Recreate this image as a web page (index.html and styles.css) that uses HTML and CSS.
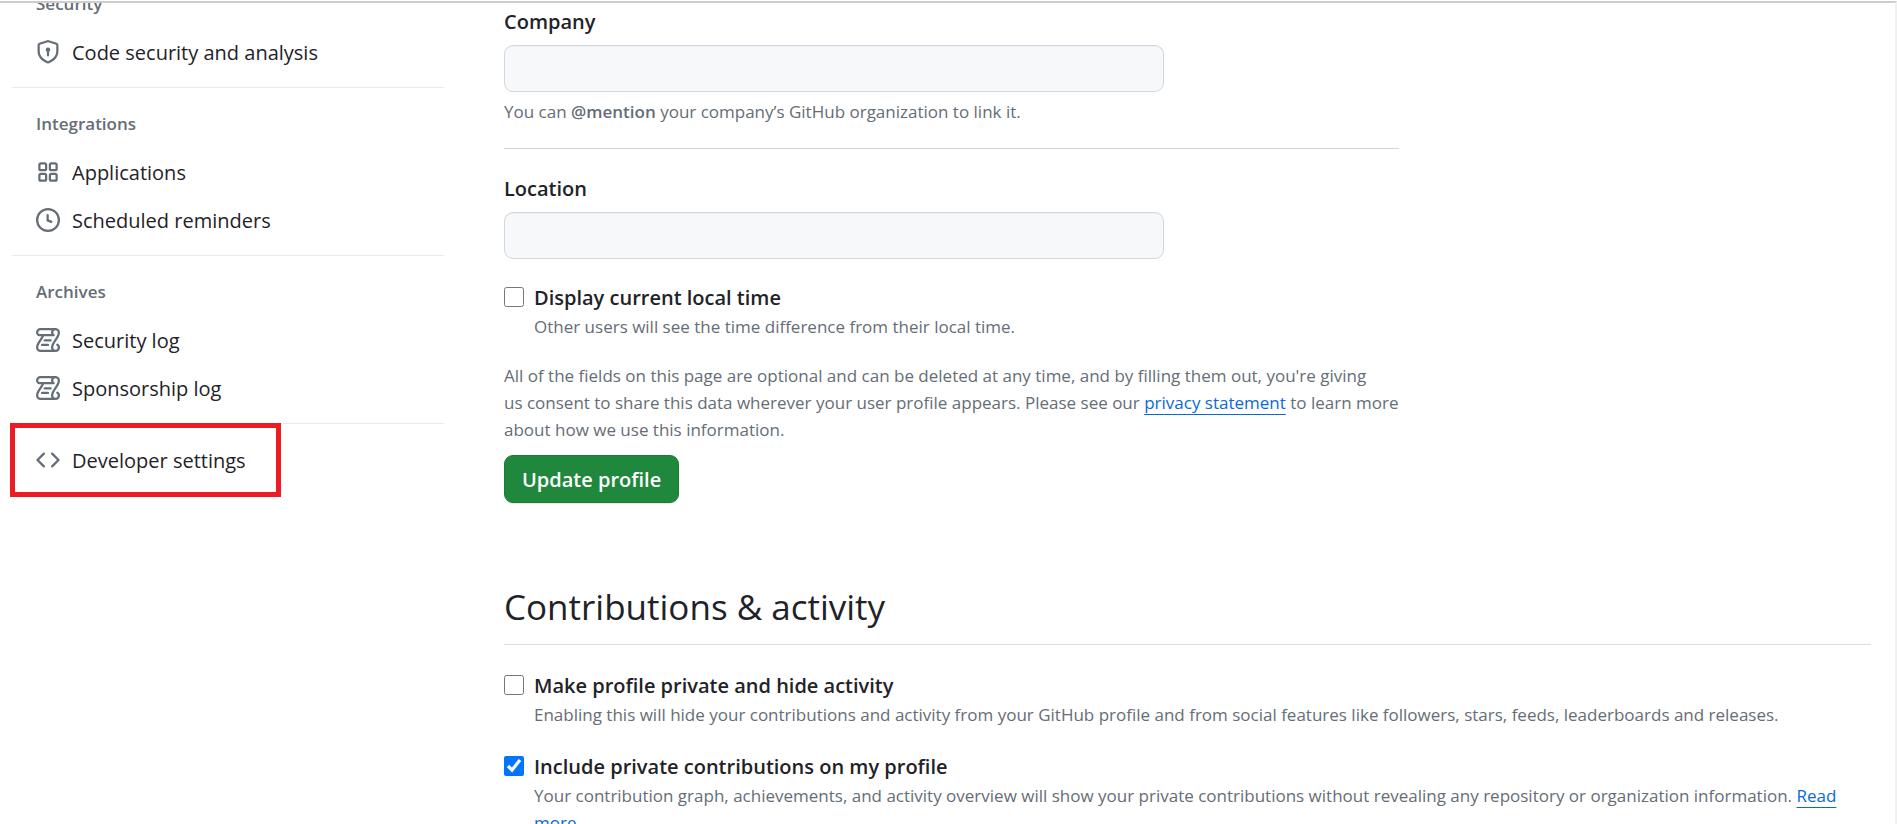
FILE: index.html
```html
<!DOCTYPE html>
<html lang="en">
<head>
<meta charset="utf-8">
<meta name="viewport" content="width=device-width, initial-scale=1">
<title>Profile settings</title>
<link rel="stylesheet" href="styles.css">
</head>
<body>
<svg class="sprite" aria-hidden="true">
  <symbol id="shield" viewBox="0 0 16 16"><path d="m8.533.133 5.25 1.68A1.75 1.75 0 0 1 15 3.48V7c0 1.566-.32 3.182-1.303 4.682-.983 1.498-2.585 2.813-5.032 3.855a1.697 1.697 0 0 1-1.33 0c-2.447-1.042-4.049-2.357-5.032-3.855C1.32 10.182 1 8.566 1 7V3.48a1.755 1.755 0 0 1 1.217-1.667l5.25-1.68a1.748 1.748 0 0 1 1.066 0Zm-.61 1.429.001.001-5.25 1.68a.251.251 0 0 0-.174.237V7c0 1.36.275 2.666 1.057 3.859.784 1.194 2.121 2.342 4.366 3.298a.196.196 0 0 0 .154 0c2.245-.957 3.582-2.103 4.366-3.297C13.225 9.666 13.5 8.358 13.5 7V3.48a.25.25 0 0 0-.174-.238l-5.25-1.68a.25.25 0 0 0-.153 0ZM9.5 6.5c0 .536-.286 1.032-.75 1.3v2.45a.75.75 0 0 1-1.5 0V7.8A1.5 1.5 0 1 1 9.5 6.5Z"/></symbol>
  <symbol id="apps" viewBox="0 0 16 16"><path d="M1.5 3.25c0-.966.784-1.75 1.75-1.75h2.5c.966 0 1.75.784 1.75 1.75v2.5A1.75 1.75 0 0 1 5.75 7.5h-2.5A1.75 1.75 0 0 1 1.5 5.75Zm7 0c0-.966.784-1.75 1.75-1.75h2.5c.966 0 1.75.784 1.75 1.75v2.5a1.75 1.75 0 0 1-1.75 1.75h-2.5A1.75 1.75 0 0 1 8.500 5.75Zm-7 7c0-.966.784-1.75 1.75-1.75h2.5c.966 0 1.75.784 1.75 1.75v2.5a1.75 1.75 0 0 1-1.75 1.75h-2.5a1.75 1.75 0 0 1-1.75-1.75Zm7 0c0-.966.784-1.75 1.75-1.75h2.5c.966 0 1.75.784 1.75 1.75v2.5a1.75 1.75 0 0 1-1.75 1.75h-2.5a1.75 1.75 0 0 1-1.75-1.75ZM3.250 3a.25.25 0 0 0-.25.25v2.5c0 .138.112.25.25.25h2.5A.25.25 0 0 0 6 5.75v-2.5A.25.25 0 0 0 5.750 3Zm7 0a.25.25 0 0 0-.25.25v2.5c0 .138.112.25.25.25h2.5a.25.25 0 0 0 .25-.25v-2.5a.25.25 0 0 0-.25-.25Zm-7 7a.25.25 0 0 0-.25.25v2.5c0 .138.112.25.25.25h2.500a.25.25 0 0 0 .25-.25v-2.5a.25.25 0 0 0-.25-.25Zm7 0a.25.25 0 0 0-.25.25v2.5c0 .138.112.25.25.25h2.500a.25.25 0 0 0 .25-.25v-2.5a.25.25 0 0 0-.25-.25Z"/></symbol>
  <symbol id="clock" viewBox="0 0 16 16"><path d="M8 0a8 8 0 1 1 0 16A8 8 0 0 1 8 0ZM1.500 8a6.500 6.500 0 1 0 13 0 6.500 6.500 0 0 0-13 0Zm7-3.250v2.992l2.028.812a.75.75 0 0 1-.557 1.392l-2.500-1A.751.751 0 0 1 7 8.250v-3.500a.75.75 0 0 1 1.500 0Z"/></symbol>
  <symbol id="log" viewBox="0 0 16 16"><path d="M5 8.250a.75.75 0 0 1 .75-.75h4a.75.75 0 0 1 0 1.500h-4A.75.75 0 0 1 5 8.250ZM4 10.500A.75.75 0 0 0 4 12h4a.75.75 0 0 0 0-1.500H4Z"/><path d="M13-.005c1.654 0 3 1.328 3 3 0 .982-.338 1.933-.783 2.818-.443.879-1.028 1.758-1.582 2.588l-.011.017c-.568.853-1.104 1.659-1.501 2.446-.398.789-.623 1.494-.623 2.136a1.500 1.500 0 1 0 2.333-1.248.75.75 0 0 1 .834-1.246A3 3 0 0 1 13 16H3a3 3 0 0 1-3-3c0-1.582.891-3.135 1.777-4.506.209-.322.418-.637.623-.946.473-.709.923-1.386 1.287-2.048H2.510c-.576 0-1.381-.133-1.907-.783A2.680 2.680 0 0 1 0 2.995a3 3 0 0 1 3-3Zm0 1.500a1.500 1.500 0 0 0-1.500 1.500c0 .476.223.834.667 1.132A.75.75 0 0 1 11.750 5.500H5.368c-.467 1.003-1.141 2.015-1.773 2.963-.192.289-.381.571-.558.845C2.130 10.711 1.500 11.916 1.500 13A1.500 1.500 0 0 0 3 14.500h7.401A2.989 2.989 0 0 1 10 13c0-.979.338-1.928.784-2.812.441-.874 1.023-1.748 1.575-2.576l.017-.026c.568-.853 1.103-1.658 1.501-2.448.398-.79.623-1.497.623-2.143 0-.838-.669-1.500-1.500-1.500Zm-10 0a1.500 1.500 0 0 0-1.500 1.500c0 .321.100.569.270.778.097.120.325.227.740.227h7.674A2.737 2.737 0 0 1 10 2.995c0-.546.146-1.059.401-1.500Z"/></symbol>
  <symbol id="code" viewBox="0 0 16 16"><path d="m11.280 3.220 4.250 4.250a.75.75 0 0 1 0 1.060l-4.250 4.250a.749.749 0 0 1-1.275-.326.749.749 0 0 1 .215-.734L13.940 8l-3.720-3.720a.749.749 0 0 1 .326-1.275.749.749 0 0 1 .734.215Zm-6.560 0a.751.751 0 0 1 1.042.018.751.751 0 0 1 .018 1.042L2.060 8l3.720 3.720a.749.749 0 0 1-.326 1.275.749.749 0 0 1-.734-.215L.470 8.530a.75.75 0 0 1 0-1.060Z"/></symbol>
</svg>
<div class="page">
  <nav class="sidebar" aria-label="Settings">
    <section class="nav-section">
      <h3 class="nav-heading">Security</h3>
      <a class="nav-item" href="#"><svg class="icon"><use href="#shield"/></svg>Code security and analysis</a>
    </section>
    <section class="nav-section">
      <h3 class="nav-heading">Integrations</h3>
      <a class="nav-item" href="#"><svg class="icon"><use href="#apps"/></svg>Applications</a>
      <a class="nav-item" href="#"><svg class="icon"><use href="#clock"/></svg>Scheduled reminders</a>
    </section>
    <section class="nav-section">
      <h3 class="nav-heading">Archives</h3>
      <a class="nav-item" href="#"><svg class="icon"><use href="#log"/></svg>Security log</a>
      <a class="nav-item" href="#"><svg class="icon"><use href="#log"/></svg>Sponsorship log</a>
    </section>
    <section class="nav-last">
      <a class="nav-item" href="#"><svg class="icon"><use href="#code"/></svg>Developer settings</a>
      <span class="highlight"></span>
    </section>
  </nav>
  <main class="content">
    <form class="profile">
      <div class="field">
        <label class="label" for="company">Company</label>
        <input class="input" id="company" type="text">
        <p class="note">You can <strong>@mention</strong> your company’s GitHub organization to link it.</p>
      </div>
      <hr class="rule">
      <div class="field">
        <label class="label" for="location">Location</label>
        <input class="input" id="location" type="text">
      </div>
      <div class="check">
        <input class="box" id="local-time" type="checkbox">
        <label class="label" for="local-time">Display current local time</label>
        <p class="note">Other users will see the time difference from their local time.</p>
      </div>
      <p class="note consent">All of the fields on this page are optional and can be deleted at any time, and by filling them out, you're giving<br>us consent to share this data wherever your user profile appears. Please see our <a class="link" href="#">privacy statement</a> to learn more about how we use this information.</p>
      <button class="button" type="button">Update profile</button>
    </form>
    <h2 class="title">Contributions &amp; activity</h2>
    <div class="check">
      <input class="box" id="private" type="checkbox">
      <label class="label" for="private">Make profile private and hide activity</label>
      <p class="note">Enabling this will hide your contributions and activity from your GitHub profile and from social features like followers, stars, feeds, leaderboards and releases.</p>
    </div>
    <div class="check">
      <input class="box" id="include" type="checkbox" checked>
      <label class="label" for="include">Include private contributions on my profile</label>
      <p class="note">Your contribution graph, achievements, and activity overview will show your private contributions without revealing any repository or organization information. <a class="link" href="#">Read more</a>.</p>
    </div>
  </main>
</div>
</body>
</html>
```
FILE: styles.css
```css
* { box-sizing: border-box; }

body {
  margin: 0;
  padding-top: 1px;
  height: 100vh;
  overflow: hidden;
  background: #fff;
  color: #1f2328;
  font-family: "Segoe UI", "Open Sans", "Noto Sans", sans-serif;
  font-size: 20px;
}

h2, h3, p { margin: 0; }

.sprite { position: absolute; width: 0; height: 0; }

.page {
  display: flex;
  gap: 60px;
  height: 100%;
  padding: 0 24px 0 12px;
  overflow: hidden;
  border-top: 2px solid #cdcdcd;
  border-right: 2px solid #f0f0f0;
}

/* Sidebar, scrolled so that its first heading is partly out of view */
.sidebar { flex: 0 0 432px; margin-top: -35px; }

.nav-section { padding-bottom: 11px; border-bottom: 1px solid #e8eaed; }

.nav-heading {
  padding: 24px 24px 12px;
  color: #656d76;
  font-size: 17px;
  font-weight: 600;
  line-height: 24px;
}

.nav-item {
  display: flex;
  align-items: center;
  gap: 12px;
  height: 48px;
  padding: 0 24px;
  color: #1f2328;
  text-decoration: none;
}

.icon { width: 24px; height: 24px; fill: #656d76; }

.nav-last { position: relative; padding-top: 12px; }

.highlight {
  position: absolute;
  top: -1px;
  left: -2px;
  width: 271px;
  height: 74px;
  border: 5px solid #ed1c24;
  pointer-events: none;
}

/* Main column */
.content { flex: 1; min-width: 0; padding-top: 2px; }

.profile { max-width: 895px; }

.label { display: block; padding-top: 2px; font-weight: 600; line-height: 30px; }

.input {
  display: block;
  width: 660px;
  max-width: 100%;
  height: 47px;
  margin-top: 8px;
  padding: 0 18px;
  border: 1px solid #d0d7de;
  border-radius: 9px;
  background: #f6f8fa;
  box-shadow: inset 0 1px 0 rgba(208, 215, 222, 0.2);
  font: inherit;
}

.note { color: #656d76; font-size: 17px; line-height: 27px; }

.field .note { margin-top: 6px; }

.note strong { font-weight: 600; }

.rule { height: 1px; margin: 23px 0; border: 0; background: #d0d7de; }

.check {
  display: grid;
  grid-template-columns: 20px 1fr;
  column-gap: 10px;
  align-items: center;
  margin-top: 22px;
}

.check .note { grid-column: 2; }

.box { width: 20px; height: 20px; margin: 0; accent-color: #0075ff; }

.consent { margin-top: 22px; }

.link { color: #0969da; text-decoration: underline; text-underline-offset: 5px; }

.button {
  height: 48px;
  margin-top: 12px;
  padding: 0 17px;
  border: 1px solid #1f7a37;
  border-radius: 9px;
  background: #1f883d;
  box-shadow: 0 1px 0 rgba(31, 35, 40, 0.1);
  color: #fff;
  font: inherit;
  font-weight: 600;
}

.title {
  margin: 77px 0 24px;
  padding-bottom: 10px;
  border-bottom: 1px solid #d8dee4;
  font-size: 35px;
  font-weight: 400;
  line-height: 54px;
}

.title + .check { margin-top: 0; }
```
